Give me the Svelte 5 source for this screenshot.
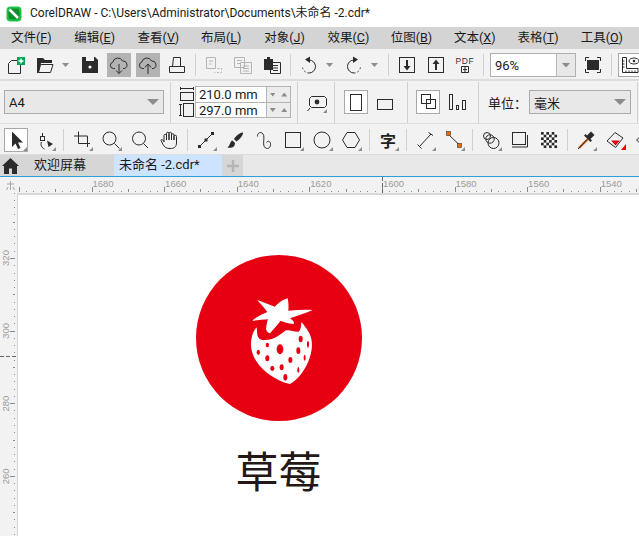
<script>
  const menus = [['文件','F'],['编辑','E'],['查看','V'],['布局','L'],['对象','J'],['效果','C'],['位图','B'],['文本','X'],['表格','T'],['工具','O']];
  const P = 7.26;
  const hT = [];
  for (let k = -10; k < 76; k++) hT.push({ x: Math.round(91.5 + k * P) + .5, k: ((k % 10) + 10) % 10 });
  const hL = [1680,1660,1640,1620,1600,1580,1560,1540].map((v, i) => ({ v, x: 92.5 + i * 72.6 }));
  const vT = [];
  for (let k = -9; k < 40; k++) vT.push({ y: Math.round(258 + k * P) + .5, k: ((k % 10) + 10) % 10 });
  const vL = [320,300,280,260].map((v, i) => ({ v, y: 258 + i * 72.8 }));
  const checks = [];
  for (let r = 0; r < 6; r++) for (let c = 0; c < 6; c++) if ((r + c) % 2 === 0) checks.push({ x: 4 + c * 2.67, y: 4 + r * 2.67 });
  const seeds = [[55,187,5,8],[82,165,5,7],[120,178,10,15],[82,205,6,9],[97,235,6,8],[125,232,6,9],[136,262,6,10],[151,210,6,9],[175,182,6,10],[182,147,6,10],[204,163,3,10],[194,203,3,9],[175,240,3,9]];
</script>

<div class="app">
  <div class="title">
    <svg class="logo" viewBox="0 0 16 16"><rect x="0.5" y="0.5" width="15" height="15" rx="4" fill="#1fc247"/><rect x="2.5" y="2.5" width="11" height="11" rx="3" fill="#0c8f2a"/><path d="M3.5 3.5L12 12" stroke="#fff" stroke-width="2.6"/></svg>
    <span>CorelDRAW - C:\Users\Administrator\Documents\未命名 -2.cdr*</span>
  </div>

  <div class="menu">
    {#each menus as m}
      <span>{m[0]}(<u>{m[1]}</u>)</span>
    {/each}
  </div>

  <div class="row r1">
    <div class="b"><svg viewBox="0 0 24 24"><path class="s" d="M4.5 20.5V10.5L7.5 7.5H13M16.5 12V20.5H4.5"/><rect x="13" y="4" width="8" height="8" fill="#00a651"/><path d="M17 5.5V10.5M14.5 8H19.5" stroke="#fff" stroke-width="1.4"/></svg></div>
    <div class="b"><svg viewBox="0 0 24 24"><path class="f" d="M4 5H10L12 7H19V10H8L5.5 20H4Z"/><path class="s" d="M7.5 11.5H20L17.5 19.5H5.5Z"/></svg></div>
    <div class="arr"></div>
    <div class="b"><svg viewBox="0 0 24 24"><path class="f" d="M4 4H17L20 7V20H4Z"/><rect x="8" y="4" width="8" height="4" fill="#f2f2f2"/><circle cx="12" cy="14" r="1.6" fill="#fff"/></svg></div>
    <div class="b on"><svg viewBox="0 0 24 24"><path class="s" d="M8 15.5H6.5A3.2 3.2 0 0 1 5.8 9.2 5.2 5.2 0 0 1 15.6 8 3.9 3.9 0 0 1 17.5 15.5H16"/><path class="s" d="M12 11V20.5M9 17.5L12 20.5 15 17.5" stroke-width="1.5"/></svg></div>
    <div class="b on"><svg viewBox="0 0 24 24"><path class="s" d="M8 15.5H6.5A3.2 3.2 0 0 1 5.8 9.2 5.2 5.2 0 0 1 15.6 8 3.9 3.9 0 0 1 17.5 15.5H16"/><path class="s" d="M12 21V11.5M8.8 14.5L12 11 15.2 14.5" stroke-width="1.7"/></svg></div>
    <div class="b"><svg viewBox="0 0 24 24"><path class="s" d="M7.5 13.5L8.5 4.5H15.5V13.5"/><path class="s" d="M4.5 13.5H19.5V19.5H4.5Z"/></svg></div>
    <div class="sep"></div>
    <div class="b"><svg viewBox="0 0 24 24"><path class="g" d="M4.5 4.5H13.5V15.5H4.5ZM7 8H11M7 11H9.5"/><path class="g" d="M15.5 15.5H19.5V19.5H12.5" stroke-dasharray="2 1.5"/></svg></div>
    <div class="b"><svg viewBox="0 0 24 24"><path class="g" d="M3.5 4.5H13.5V14.5H3.5ZM6 7.5H11M6 10.5H9"/><path class="g" d="M9.5 9.5H20.5V20.5H9.5ZM12 13H18M12 15.5H18M12 18H18" fill="#f2f2f2"/></svg></div>
    <div class="b"><svg viewBox="0 0 24 24"><path class="f" d="M4 6H7V4H10V6H13V17H4Z"/><path class="s" d="M10.5 9.5H20.5V20.5H10.5Z" fill="#fff"/><path class="s" d="M13 12.5H18M13 15H18M13 17.5H18"/></svg></div>
    <div class="sep"></div>
    <div class="b"><svg viewBox="0 0 24 24"><path class="s" d="M12 7A6.5 6.5 0 1 1 12 20" stroke-width="1.4"/><path class="s" d="M12 20A6.5 6.5 0 0 1 5.5 13.5" stroke="#666" stroke-dasharray="1.6 2"/><path class="f" d="M8 6.5L13 3.5V10Z"/></svg></div>
    <div class="arr"></div>
    <div class="b"><svg viewBox="0 0 24 24"><path class="s" d="M12 7A6.5 6.5 0 1 0 12 20" stroke-width="1.4"/><path class="s" d="M12 20A6.5 6.5 0 0 0 18.5 13.5" stroke="#666" stroke-dasharray="1.6 2"/><path class="f" d="M16 6.5L11 3.5V10Z"/></svg></div>
    <div class="arr"></div>
    <div class="sep"></div>
    <div class="b"><svg viewBox="0 0 24 24"><rect class="s" x="4.5" y="4.5" width="15" height="15"/><path class="f" d="M11 7H13V13H15.5L12 17.5 8.5 13H11Z"/></svg></div>
    <div class="b"><svg viewBox="0 0 24 24"><rect class="s" x="4.5" y="4.5" width="15" height="15"/><path class="f" d="M11 17H13V11H15.5L12 6.5 8.5 11H11Z"/></svg></div>
    <div class="b pdf">
      <span>PDF</span>
      <svg class="mini" viewBox="0 0 8 7"><path class="s" d="M.5.5H7.5V6.5H.5ZM4 .5V6.5M2 3.5H6"/></svg>
    </div>
    <div class="sep"></div>
    <div class="combo zoomc"><span class="val">96%</span><span class="dd"><i></i></span></div>
    <div class="b"><svg viewBox="0 0 24 24"><rect class="f" x="6" y="7" width="12" height="10"/><path class="s" d="M4.5 8V4.5H8M16 4.5H19.5V8M4.5 16V19.5H8M16 19.5H19.5V16" stroke-width="1.2"/></svg></div>
    <div class="sep"></div>
    <div class="b sel"><svg viewBox="0 0 24 24"><path class="s" d="M4.5 4.5H8.5V15.5H20V19.5H4.5ZM4.5 8H6.5M4.5 11H6.5M4.5 14H6.5M8 19.5V17.5M11 19.5V17.5M14 19.5V17.5M17 19.5V17.5"/><ellipse class="s" cx="16" cy="8" rx="5" ry="3"/><circle class="f" cx="16" cy="8" r="1.3"/></svg></div>
  </div>

  <div class="row r2">
    <div class="combo a4"><span class="val">A4</span><i></i></div>
    <div class="sep"></div>
    <div class="size">
      <div class="srow">
        <svg class="ic18" viewBox="0 0 18 16"><path class="s" d="M3.5 2.5H16.5M3.5 1V4M16.5 1V4"/><rect class="s" x="3.5" y="6.5" width="13" height="8"/></svg>
        <div class="inp">210.0 mm</div>
        <div class="spin"><i class="dn"></i><i class="up"></i></div>
      </div>
      <div class="srow">
        <svg class="ic18" viewBox="0 0 18 16"><path class="s" d="M3.5 2V14M2 2.5H5M2 13.5H5"/><rect class="s" x="6.5" y="1.5" width="10" height="13"/></svg>
        <div class="inp">297.0 mm</div>
        <div class="spin"><i class="dn"></i><i class="up"></i></div>
      </div>
    </div>
    <div class="sep"></div>
    <div class="b c"><svg viewBox="0 0 24 24"><path class="s" d="M7.5 6.5H20.5L22.5 8.5V15.5L20.5 17.5H7.5L5.5 15.5V8.5Z"/><circle class="f" cx="13" cy="12" r="2.4"/><path class="s" d="M6 18L3.5 21"/></svg></div>
    <div class="sep"></div>
    <div class="b sel ml3"><svg viewBox="0 0 24 24"><rect class="s" x="6.5" y="4.5" width="11" height="16"/></svg></div>
    <div class="b"><svg viewBox="0 0 24 24"><rect class="s" x="4.5" y="9.5" width="15" height="10"/></svg></div>
    <div class="sep ml4"></div>
    <div class="b sel ml2"><svg viewBox="0 0 24 24"><rect class="s" x="5.5" y="4.5" width="9" height="9"/><rect class="s" x="10.5" y="9.5" width="9" height="9"/></svg></div>
    <div class="b"><svg viewBox="0 0 24 24"><rect class="s" x="4.5" y="4.5" width="3" height="15"/><rect class="s" x="11.5" y="15.5" width="2" height="4"/><rect class="s" x="17.5" y="10.5" width="3" height="9"/></svg></div>
    <div class="sep ml3"></div>
    <span class="unit">单位：</span>
    <div class="combo mm"><span class="val">毫米</span><i></i></div>
    <div class="sep"></div>
  </div>

  <div class="row r3">
    <div class="b sel c"><svg viewBox="0 0 24 24"><path class="f" d="M8 3.5V19L11.5 15.5 14 21 16.5 20 14 14.5H19Z"/></svg></div>
    <div class="b c"><svg viewBox="0 0 24 24"><path class="s" d="M9.5 5V8M8.5 14C7 17 9 20 11.5 21"/><rect class="s" x="7.5" y="8.5" width="4" height="4"/><path class="f" d="M14 12.5L20 16 15.5 19Z"/></svg></div>
    <div class="sep"></div>
    <div class="b c"><svg viewBox="0 0 24 24"><path class="s" d="M4 8H17.5V19M8.5 3.5V15.5H20" stroke-width="2"/></svg></div>
    <div class="b c"><svg viewBox="0 0 24 24"><circle class="s" cx="10.5" cy="10.5" r="6.5"/><path class="s" d="M15.5 15.5L20.5 20.5" stroke-width="2.2"/></svg></div>
    <div class="b"><svg viewBox="0 0 24 24"><circle class="s" cx="11" cy="10.5" r="6.5"/><path class="s" d="M15.5 15.5L20 20" stroke-width="2.2"/></svg></div>
    <div class="b"><svg viewBox="0 0 24 24"><path class="s" d="M7 14V7.5A1.2 1.2 0 0 1 9.5 7.5V12M9.5 12V5.5A1.2 1.2 0 0 1 12 5.5V12M12 12V5.5A1.2 1.2 0 0 1 14.5 5.5V12M14.5 12V7A1.2 1.2 0 0 1 17 7V12M17 12V8.5A1.2 1.2 0 0 1 19.5 8.5V15C19.5 19 17 20.5 13 20.5 9 20.5 7.5 19 6 16.5L4 12.5C4 11 6 11 7 14"/></svg></div>
    <div class="sep"></div>
    <div class="b c"><svg viewBox="0 0 24 24"><path class="s" d="M5 19L19 5" stroke-width="1.3"/><rect class="f" x="4" y="17" width="3" height="3"/><rect class="f" x="10.5" y="10.5" width="3" height="3"/><rect class="f" x="17" y="4" width="3" height="3"/></svg></div>
    <div class="b"><svg viewBox="0 0 24 24"><path class="f" d="M20 4.5C18 4 13 7.5 11 11L13.5 13.5C17 11 20.5 7 20 4.5ZM9.5 12.5C7 13 7.5 17 4.5 19.5 8 20.5 12 19.5 12 15Z"/></svg></div>
    <div class="b"><svg viewBox="0 0 24 24"><path class="s" d="M5.5 8.5C5 5 9 3 11 6 13.5 9.5 9.5 17 13.5 20 16.5 21.5 19 19 18.5 15.5 18 13 15.5 12.5 14.5 14.5" stroke-width="1.5"/></svg></div>
    <div class="b c"><svg viewBox="0 0 24 24"><rect class="s" x="4.5" y="4.5" width="15" height="15" stroke-width="1.3"/></svg></div>
    <div class="b c"><svg viewBox="0 0 24 24"><circle class="s" cx="12" cy="12" r="8"/></svg></div>
    <div class="b c"><svg viewBox="0 0 24 24"><path class="s" d="M8 4.5H16L20.5 12 16 19.5H8L3.5 12Z"/></svg></div>
    <div class="sep"></div>
    <div class="b c zi">字</div>
    <div class="sep"></div>
    <div class="b c"><svg viewBox="0 0 24 24"><path class="s" d="M18 6L6.5 18.5M15.5 4.5L20 7.5M4.5 16.5L8.5 20.5"/></svg></div>
    <div class="b c"><svg viewBox="0 0 24 24"><path class="s" d="M6 6L18 17.5"/><rect x="4.5" y="3.5" width="4" height="4" fill="#ec6a00" stroke="#333" stroke-width=".6"/><rect x="15.5" y="15.5" width="4" height="4" fill="#ec6a00" stroke="#333" stroke-width=".6"/></svg></div>
    <div class="sep"></div>
    <div class="b c"><svg viewBox="0 0 24 24"><circle class="s" cx="8" cy="8" r="3.5" stroke="#777"/><circle class="s" cx="11" cy="11" r="4.2" stroke="#777"/><circle class="s" cx="14.5" cy="15" r="5.5"/></svg></div>
    <div class="b"><svg viewBox="0 0 24 24"><rect class="s" x="4.5" y="4.5" width="13" height="12" stroke-width="1.2"/><path class="s" d="M4 19H19.5V7" stroke-width="2"/></svg></div>
    <div class="b"><svg viewBox="0 0 24 24"><rect x="4" y="4" width="16" height="16" fill="#fff"/>{#each checks as q}<rect x={q.x} y={q.y} width="2.7" height="2.7" fill="#2a2a2a"/>{/each}</svg></div>
    <div class="sep"></div>
    <div class="b c"><svg viewBox="0 0 24 24"><path d="M5 20L14 11" stroke="#d2691e" stroke-width="2.4"/><path class="s" d="M4 21L13 11.5" stroke-width=".8"/><path class="f" d="M13 7.5L17 3.5 20.5 7 16.5 11 18 12.5 16.5 14 10 7.5 11.5 6Z"/></svg></div>
    <div class="b"><svg viewBox="0 0 24 24"><path class="s" d="M12 4.5L20 10 12.5 19.5 4 13Z" stroke-width="1.5"/><path d="M8 12.5H17L12.5 17.5Z" fill="#e60012"/><path d="M23 22H18L23 16Z" fill="#f00"/></svg></div>
    <div class="b"><svg viewBox="0 0 24 24"><path class="s" d="M4.5 12L9 8 13 12 9 16Z" stroke="#666"/></svg></div>
  </div>

  <div class="tabs">
    <div class="home">
      <svg viewBox="0 0 18 18"><path class="f" d="M9.5 1L18 9H16V17H11V11.5H8V17H3V9H1Z"/></svg>
    </div>
    <div class="tab t1">欢迎屏幕</div>
    <div class="tab t2">未命名 -2.cdr*</div>
    <div class="plus"><svg viewBox="0 0 12 12"><path d="M6 0V12M0 6H12" stroke="#b5b5b5" stroke-width="2.4"/></svg></div>
  </div>

  <svg class="hr" viewBox="0 177 639 16">
    <path d="M10.5 181V190M7 184H14M8 187L6.5 190M13 187L14.5 190" fill="none" stroke="#a5a5a5"/>
    {#each hT as t}
      {#if t.x > 18}
        <rect x={t.x - .5} y={t.k === 0 ? 187 : t.k === 5 ? 189 : 191} width="1" height={t.k === 0 ? 5 : t.k === 5 ? 3 : 1} fill="#8a8a8a"/>
      {/if}
    {/each}
    {#each hL as l}
      <text x={l.x} y="186.5" class="rt">{l.v}</text>
    {/each}
    <path d="M382.5 177V193" stroke="#666" stroke-dasharray="4 2"/>
  </svg>

  <div class="body">
    <svg class="vr" viewBox="0 193 17 343">
      {#each vT as t}
        <rect x={t.k === 0 ? 10 : t.k === 5 ? 13 : 14} y={t.y - .5} width={t.k === 0 ? 5 : t.k === 5 ? 2 : 1} height="1" fill="#8a8a8a"/>
      {/each}
      {#each vL as l}
        <text x="9" y={l.y} class="rt mid" transform="rotate(-90 9 {l.y})">{l.v}</text>
      {/each}
      <path d="M0 356.5H17" stroke="#666" stroke-dasharray="4 2"/>
    </svg>
    <div class="canvas">
      <svg class="mark" viewBox="0 0 166 166">
        <circle cx="83" cy="83" r="83" fill="#e60012"/>
        <g transform="translate(44 35) scale(.3333)">
          <path fill="#fff" d="M37 92C50 80 68 72 82 66 72 52 62 42 52 30 70 36 90 45 105 50 115 40 125 30 143 25 146 40 146 50 145 62 170 60 195 58 218 60 195 70 170 78 150 85 160 92 165 98 160 102 145 100 130 96 122 92 112 105 100 118 90 130 85 130 80 125 78 118 80 105 80 98 84 88 70 88 50 92 37 92Z"/>
          <path fill="#fff" d="M50 112C38 125 33 145 33 165 33 200 60 235 90 255 110 268 130 278 150 282 175 268 200 235 210 200 218 175 218 150 208 130 200 115 192 105 184 96 184 108 182 120 176 125 165 128 150 118 135 122 120 135 100 150 75 150 65 152 55 148 52 135Z"/>
          {#each seeds as s}
            <ellipse cx={s[0]} cy={s[1]} rx={s[2]} ry={s[3]} fill="#e60012"/>
          {/each}
        </g>
      </svg>
      <div class="name">草莓</div>
    </div>
  </div>
</div>

<style>
  :global(body) { margin: 0; background: #fff; }
  .app {
    width: 639px; height: 536px; overflow: hidden; display: flex; flex-direction: column;
    font-family: Roboto, "Noto Sans CJK SC", sans-serif; color: #1a1a1a;
    background: #f2f2f2;
  }
  .title { height: 27px; flex: none; background: #fff; display: flex; align-items: center; font-size: 12px; line-height: 27px; white-space: nowrap; }
  .logo { width: 16px; height: 16px; margin: 0 8px 0 6px; }
  .menu { height: 22px; flex: none; background: #d4d4d4; display: flex; padding-left: 11px; font-size: 12.5px; line-height: 22px; white-space: nowrap; }
  .menu span { width: 63.3px; flex: none; }
  .row { display: flex; flex: none; gap: 5px; padding-left: 4px; box-sizing: border-box; background: #f2f2f2; overflow: hidden; }
  .r1 { height: 32px; padding-top: 4px; border-bottom: 2px solid #dcdcdc; }
  .r2 { height: 43px; align-items: center; border-bottom: 1px solid #dcdcdc; }
  .r3 { height: 31px; padding-top: 4px; border-bottom: 1px solid #dcdcdc; }
  .b { width: 24px; height: 24px; flex: none; position: relative; box-sizing: border-box; }
  .b svg { width: 24px; height: 24px; display: block; overflow: visible; }
  .b.on { background: #b3b3b3; }
  .b.sel { background: #fff; outline: 1px solid #a8a8a8; outline-offset: -1px; }
  .c::after { content: ""; position: absolute; right: 1px; bottom: 1px; border: 2.5px solid transparent; border-right-color: #8c8c8c; border-bottom-color: #8c8c8c; }
  .s { fill: none; stroke: #2b2b2b; stroke-width: 1; }
  .f { fill: #2b2b2b; }
  .g { fill: none; stroke: #b4b4b4; stroke-width: 1; }
  .sep { width: 1px; flex: none; margin: 1px 1px; background: #d0d0d0; height: 22px; }
  .r2 .sep { height: 41px; margin: 0 1px; }
  .ml2 { margin-left: 2px; }
  .ml3 { margin-left: 3px; }
  .r2 .sep.ml3 { margin-left: 4px; }
  .r2 .sep.ml4 { margin-left: 5px; }
  .arr { width: 7px; height: 4px; flex: none; margin: 10px 4px 0 0; clip-path: polygon(0 0, 100% 0, 50% 100%); background: #8c8c8c; }
  .pdf { display: flex; flex-direction: column; align-items: center; font-family: "Liberation Sans", sans-serif; font-size: 8.5px; line-height: 9px; letter-spacing: .6px; padding-top: 4px; color: #333; }
  .b .mini { width: 8px; height: 7px; margin-top: 0; }
  .combo { box-sizing: border-box; flex: none; border: 1px solid #ababab; background: #e8e8e8; display: flex; align-items: center; height: 24px; font-size: 13px; position: relative; }
  .combo i, .dd i { display: block; width: 9px; height: 5px; clip-path: polygon(0 0, 100% 0, 50% 100%); background: #8c8c8c; }
  .combo .val { flex: 1; padding-left: 4px; }
  .a4 { width: 160px; }
  .a4 i, .mm i { margin-right: 4px; width: 12px; height: 6px; }
  .mm { width: 102px; margin-left: 5px; }
  .zoomc { width: 86px; background: #fff; height: 24px; border-color: #b0b0b0; }
  .zoomc .dd { width: 19px; height: 22px; background: #e8e8e8; border-left: 1px solid #b8b8b8; display: flex; align-items: center; justify-content: center; box-sizing: border-box; }
  .size { display: flex; flex-direction: column; width: 114px; }
  .srow { display: flex; height: 16px; }
  .ic18 { width: 18px; height: 16px; flex: none; }
  .inp { width: 72px; box-sizing: border-box; background: #fff; border: 1px solid #b4b4b4; border-bottom: 0; font-size: 13px; line-height: 15px; padding-left: 3px; white-space: nowrap; }
  .srow:last-child .inp { border-bottom: 1px solid #b4b4b4; height: 16px; }
  .spin { width: 24px; box-sizing: border-box; border: 1px solid #b4b4b4; border-left: 0; border-bottom: 0; display: flex; align-items: center; justify-content: space-around; background: #ececec; }
  .srow:last-child .spin { border-bottom: 1px solid #b4b4b4; }
  .spin i { display: block; width: 6px; height: 4px; background: #8c8c8c; }
  .dn { clip-path: polygon(0 0, 100% 0, 50% 100%); }
  .up { clip-path: polygon(50% 0, 100% 100%, 0 100%); }
  .unit { font-size: 13px; margin-left: 3px; width: 31px; white-space: nowrap; flex: none; }
  .zi { font-family: "Noto Sans CJK SC", sans-serif; font-size: 16px; font-weight: 700; line-height: 24px; text-align: center; color: #222; }
  .tabs { height: 22px; flex: none; box-sizing: border-box; background: #e8e8e8; border-bottom: 1px solid #2a9fdc; display: flex; font-size: 13px; line-height: 20px; white-space: nowrap; }
  .home { width: 20px; background: #d6d6d6; display: flex; align-items: center; justify-content: center; }
  .home svg { width: 18px; height: 18px; }
  .tab { box-sizing: border-box; height: 21px; }
  .t1 { width: 94px; background: #d6d6d6; padding-left: 14px; }
  .t2 { width: 108px; background: #cce4ff; padding-left: 5px; }
  .plus { width: 21px; background: #d6d6d6; display: flex; align-items: center; justify-content: center; }
  .plus svg { width: 12px; height: 12px; }
  .hr { width: 639px; height: 16px; flex: none; display: block; background: #f2f2f2; }
  .rt { font-family: "Liberation Sans", sans-serif; font-size: 9.5px; fill: #9c9c9c; }
  .mid { text-anchor: middle; }
  .body { flex: 1; display: flex; min-height: 0; }
  .vr { width: 17px; height: 343px; flex: none; display: block; background: #f2f2f2; }
  .canvas { flex: 1; position: relative; background: #fff; border-top: 2px solid #d8d8d8; border-left: 1px solid #d8d8d8; }
  .mark { position: absolute; left: 178px; top: 60px; width: 166px; height: 166px; }
  .name { position: absolute; left: 217.5px; top: 244px; font-family: "Noto Sans CJK SC", sans-serif; font-weight: 400; font-size: 43px; line-height: 60px; color: #231815; white-space: nowrap; }
</style>
